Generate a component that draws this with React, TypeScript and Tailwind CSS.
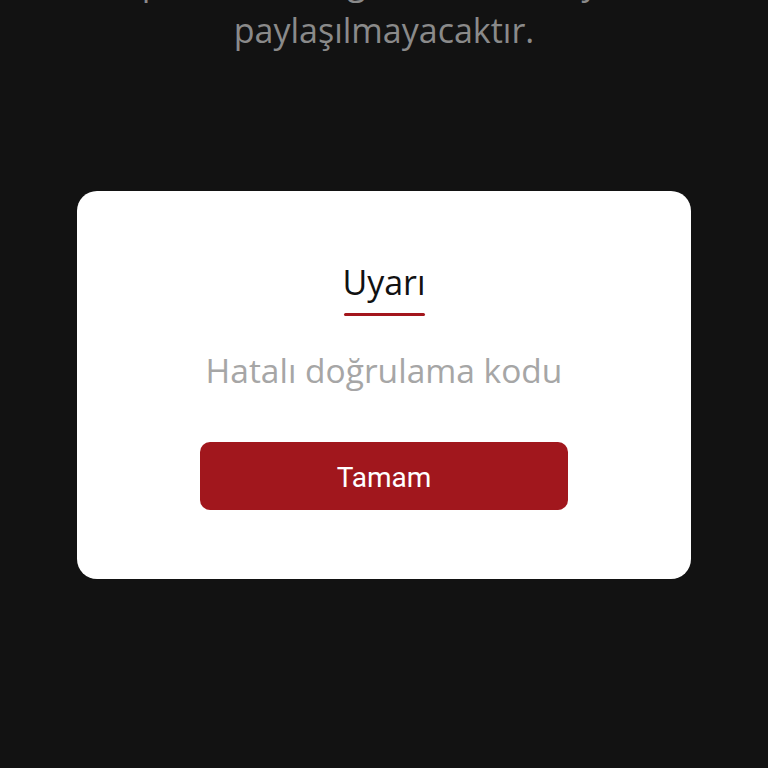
const App = () => {
  return (
    <main className="w-[768px] h-[768px] bg-[#121212] flex flex-col items-center overflow-hidden">
      {/* info text behind the dialog, scrolled partly off screen */}
      <div className="w-full h-[60px] overflow-hidden">
        <p className="-mt-[42px] text-center text-[34px] leading-[48px] text-[#8a8a8a] font-['Open_Sans',sans-serif]">
          pin kodunuz güvenlik amacıyla
          <br />
          paylaşılmayacaktır.
        </p>
      </div>
      <div className="mt-[131px] w-[614px] h-[388px] bg-white rounded-[20px] flex flex-col items-center">
        <h2 className="mt-[69px] text-[34px] leading-[44px] text-[#111111] font-['Open_Sans',sans-serif]">
          Uyarı
        </h2>
        <div className="mt-[9px] w-[81px] h-[3px] rounded-full bg-[#a3161c]" />
        <p className="mt-[32px] text-[33.5px] leading-[44px] text-[#a6a6a6] font-['Open_Sans',sans-serif]">
          Hatalı doğrulama kodu
        </p>
        <button
          type="button"
          className="mt-[50px] w-[368px] h-[68px] pt-[3px] rounded-[10px] bg-[#a1171d] text-white text-[28px] font-['Roboto',sans-serif]"
        >
          Tamam
        </button>
      </div>
    </main>
  );
};

export default App;
